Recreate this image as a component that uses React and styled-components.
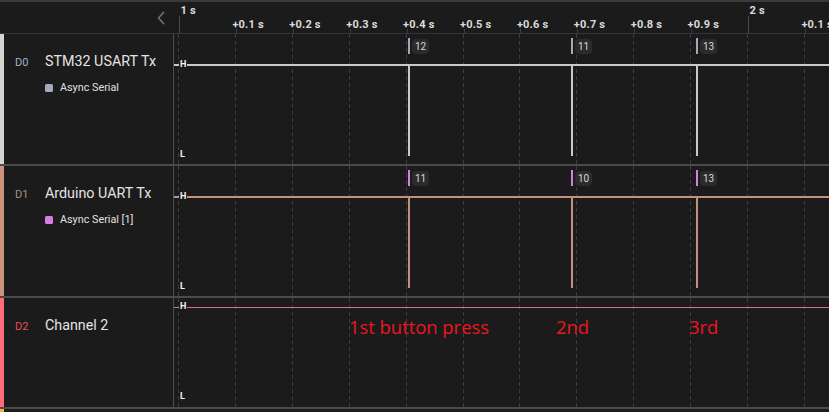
import React from 'react';
import styled, { createGlobalStyle } from 'styled-components';

const GlobalStyle = createGlobalStyle`
  html, body {
    margin: 0;
    padding: 0;
    background: #1b1b1b;
    overflow: hidden;
  }
  body {
    font-family: Roboto, 'Liberation Sans', sans-serif;
  }
`;

const TICK0 = 3.5;
const STEP = 56.9;

const Screen = styled.div`
  width: 829px;
  height: 412px;
  background: #1b1b1b;
  border-top: 2px solid #3a3a3a;
  box-sizing: border-box;
  display: flex;
  flex-direction: column;
  overflow: hidden;
`;

const Header = styled.div`
  display: flex;
  height: 31px;
  border-bottom: 1px solid #353535;
  flex-shrink: 0;
`;

const HeaderLeft = styled.div`
  width: 175px;
  display: flex;
  justify-content: flex-end;
  align-items: center;
  padding: 0 9px 0 0;
  box-sizing: border-box;
  color: #6f6f6f;
  flex-shrink: 0;
`;

const Ruler = styled.div`
  position: relative;
  flex: 1;
`;

const Tick = styled.div`
  position: absolute;
  bottom: 0;
  width: 1px;
  height: ${p => (p.$major ? '17px' : '4px')};
  background: ${p => (p.$major ? '#4a4a4a' : '#3e3e3e')};
`;

const TickLabel = styled.div`
  position: absolute;
  top: ${p => (p.$major ? '2px' : '16px')};
  font-size: 11px;
  font-weight: 700;
  color: #dcdcdc;
  white-space: nowrap;
  letter-spacing: 0.2px;
`;

const Row = styled.div`
  display: flex;
  height: ${p => p.$h}px;
  border-bottom: 2px solid #4b4b4b;
  flex-shrink: 0;
`;

const Channel = styled.div`
  width: 174px;
  border-left: 4px solid ${p => p.$color};
  border-right: 1px solid #4e4e4e;
  box-sizing: border-box;
  padding: 19px 0 0 11px;
  flex-shrink: 0;
`;

const NameLine = styled.div`
  display: flex;
  align-items: baseline;
`;

const ChanId = styled.span`
  width: 30px;
  font-size: 11px;
  color: ${p => p.$color};
`;

const ChanName = styled.span`
  font-size: 14.3px;
  color: #e4e4e4;
`;

const Decoder = styled.div`
  display: flex;
  align-items: center;
  gap: 7px;
  margin: 12px 0 0 30px;
  font-size: 10.8px;
  color: #e0e0e0;
`;

const Swatch = styled.span`
  width: 8px;
  height: 8px;
  border-radius: 1.5px;
  background: ${p => p.$color};
`;

const Plot = styled.div`
  position: relative;
  flex: 1;
  overflow: hidden;
`;

const GridLine = styled.div`
  position: absolute;
  top: 0;
  bottom: 0;
  width: 1px;
  background-image: repeating-linear-gradient(
    to bottom,
    #3d3d3d 0 4px,
    transparent 4px 7px
  );
`;

const Level = styled.div`
  position: absolute;
  left: 0;
  right: 0;
  top: ${p => p.$y}px;
  height: ${p => p.$w}px;
  background: ${p => p.$color};
`;

const Pulse = styled.div`
  position: absolute;
  top: ${p => p.$top}px;
  height: ${p => p.$len}px;
  width: 2px;
  background: ${p => p.$color};
`;

const LevelTag = styled.div`
  position: absolute;
  left: 5px;
  top: ${p => p.$y}px;
  padding: 0 1px;
  background: #1b1b1b;
  font-size: 9px;
  font-weight: 700;
  line-height: 9px;
  color: #f2f2f2;
`;

const Frame = styled.div`
  position: absolute;
  top: ${p => p.$y}px;
  display: flex;
  align-items: center;
  gap: 2px;
`;

const FrameMark = styled.span`
  width: 2px;
  height: 16px;
  background: ${p => p.$color};
`;

const FrameValue = styled.span`
  background: #2b2b2b;
  border-radius: 4px;
  padding: 1px 3px;
  font-size: 10px;
  line-height: 13px;
  color: #d8d8d8;
`;

const Note = styled.div`
  position: absolute;
  top: 16px;
  font-family: 'Open Sans', 'DejaVu Sans', sans-serif;
  font-size: 18.4px;
  color: #ec1620;
  white-space: nowrap;
`;

const NextRow = styled.div`
  flex: 1;
  border-left: 4px solid #f0b04c;
`;

const tickX = i => TICK0 + i * STEP;

const ticks = [
  { label: '1 s', major: true },
  { label: '+0.1 s' }, { label: '+0.2 s' }, { label: '+0.3 s' }, { label: '+0.4 s' },
  { label: '+0.5 s' }, { label: '+0.6 s' }, { label: '+0.7 s' }, { label: '+0.8 s' },
  { label: '+0.9 s' },
  { label: '2 s', major: true },
  { label: '+0.1 s' },
];

const pulsesX = [234, 397, 522];

const Grid = () =>
  ticks.map((t, i) => <GridLine key={i} style={{ left: tickX(i) + 0.5 }} />);

const Chevron = () => (
  <svg width="10" height="14" viewBox="0 0 10 14" fill="none">
    <path d="M7.5 1.5L2.5 7l5 5.5" stroke="currentColor" strokeWidth="1.8" strokeLinecap="round" strokeLinejoin="round" />
  </svg>
);

const channels = [
  {
    id: 'D0',
    name: 'STM32 USART Tx',
    bar: '#d4d4d4',
    idColor: '#9fb3c8',
    line: '#c9c9c9',
    decoder: 'Async Serial',
    swatch: '#a3a9ba',
    frames: ['12', '11', '13'],
    h: 130,
  },
  {
    id: 'D1',
    name: 'Arduino UART Tx',
    bar: '#c9927a',
    idColor: '#a89484',
    line: '#c4927a',
    decoder: 'Async Serial [1]',
    swatch: '#d77ee3',
    frames: ['11', '10', '13'],
    h: 130,
  },
];

const Waveform = ({ c }) => (
  <Plot>
    <Grid />
    <Level $y={30} $w={2} $color={c.line} />
    {pulsesX.map(x => (
      <Pulse key={x} style={{ left: x }} $top={30} $len={92} $color={c.line} />
    ))}
    {c.frames.map((f, i) => (
      <Frame key={i} $y={4} style={{ left: pulsesX[i] }}>
        <FrameMark $color={c.swatch} />
        <FrameValue>{f}</FrameValue>
      </Frame>
    ))}
    <LevelTag $y={26}>H</LevelTag>
    <LevelTag $y={116}>L</LevelTag>
  </Plot>
);

export default function App() {
  return (
    <Screen>
      <GlobalStyle />
      <Header>
        <HeaderLeft>
          <Chevron />
        </HeaderLeft>
        <Ruler>
          {ticks.map((t, i) => (
            <React.Fragment key={i}>
              <Tick $major={t.major} style={{ left: tickX(i) + (t.major ? 0 : 0.5) }} />
              <TickLabel $major={t.major} style={{ left: tickX(i) + (t.major ? 2 : -3) }}>
                {t.label}
              </TickLabel>
            </React.Fragment>
          ))}
        </Ruler>
      </Header>

      {channels.map(c => (
        <Row key={c.id} $h={c.h}>
          <Channel $color={c.bar}>
            <NameLine>
              <ChanId $color={c.idColor}>{c.id}</ChanId>
              <ChanName>{c.name}</ChanName>
            </NameLine>
            <Decoder>
              <Swatch $color={c.swatch} />
              {c.decoder}
            </Decoder>
          </Channel>
          <Waveform c={c} />
        </Row>
      ))}

      <Row $h={109}>
        <Channel $color="#ff6b7b">
          <NameLine>
            <ChanId $color="#e3505e">D2</ChanId>
            <ChanName>Channel 2</ChanName>
          </NameLine>
        </Channel>
        <Plot>
          <Grid />
          <Level $y={9} $w={1} $color="#d9707c" />
          <LevelTag $y={4}>H</LevelTag>
          <LevelTag $y={94}>L</LevelTag>
          <Note style={{ left: 175 }}>1st button press</Note>
          <Note style={{ left: 382 }}>2nd</Note>
          <Note style={{ left: 515 }}>3rd</Note>
        </Plot>
      </Row>
      <NextRow />
    </Screen>
  );
}
